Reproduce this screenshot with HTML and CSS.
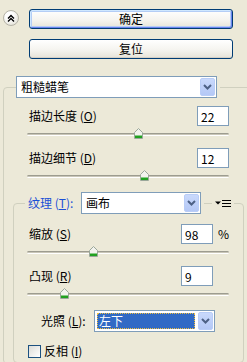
FILE: index.html
```html
<!DOCTYPE html>
<html lang="zh-CN">
<head>
    <meta charset="UTF-8">
    <title>粗糙蜡笔</title>
    <link rel="stylesheet" href="styles.css">
</head>
<body>
    <div class="actions">
        <button class="collapse" type="button">
            <svg width="8" height="8" viewBox="0 0 8 8"><path d="M1 4.5l3-3 3 3M1 7.5l3-3 3 3" fill="none" stroke="#000" stroke-width="1.4"/></svg>
        </button>
        <button class="btn default" type="button">确定</button>
        <span></span>
        <button class="btn" type="button">复位</button>
    </div>

    <fieldset class="group outer">
        <legend>
            <div class="combo filter">
                <span class="combo-text">粗糙蜡笔</span>
                <span class="combo-btn"><svg width="9" height="6" viewBox="0 0 9 6"><path d="M1 1l3.5 3.5L8 1" fill="none" stroke="#4D6185" stroke-width="2"/></svg></span>
            </div>
        </legend>
        <div class="group-body outer-body">
            <div class="param">
                <div class="row">
                    <label>描边长度 (<u>O</u>)</label>
                    <input class="num" type="text" value="22">
                </div>
                <div class="slider">
                    <div class="track"></div>
                    <span class="thumb" style="left: 107px"><svg width="9" height="11" viewBox="0 0 9 11"><path d="M4.5 0.5L8.5 4.5V10.5H0.5V4.5Z" fill="#f3f3ee" stroke="#9aa79a"/><path d="M1 7.5h7v2.5H1z" fill="#21a121"/></svg></span>
                </div>
            </div>
            <div class="param">
                <div class="row">
                    <label>描边细节 (<u>D</u>)</label>
                    <input class="num" type="text" value="12">
                </div>
                <div class="slider">
                    <div class="track"></div>
                    <span class="thumb" style="left: 113px"><svg width="9" height="11" viewBox="0 0 9 11"><path d="M4.5 0.5L8.5 4.5V10.5H0.5V4.5Z" fill="#f3f3ee" stroke="#9aa79a"/><path d="M1 7.5h7v2.5H1z" fill="#21a121"/></svg></span>
                </div>
            </div>

            <fieldset class="group inner">
                <legend>
                    <label class="texture-label">纹理 (<u>T</u>):</label>
                    <div class="combo texture">
                        <span class="combo-text">画布</span>
                        <span class="combo-btn"><svg width="9" height="6" viewBox="0 0 9 6"><path d="M1 1l3.5 3.5L8 1" fill="none" stroke="#4D6185" stroke-width="2"/></svg></span>
                    </div>
                    <span class="menu-icon">
                        <svg width="16" height="7" viewBox="0 0 16 7"><path d="M0 1.5h6l-3 3z" fill="#000"/><path d="M7 0.5h9M7 3.5h9M7 6.5h9" stroke="#000" stroke-width="1"/></svg>
                    </span>
                </legend>
                <div class="group-body inner-body">
                    <div class="param">
                        <div class="row">
                            <label>缩放 (<u>S</u>)</label>
                            <input class="num" type="text" value="98">
                            <span class="unit">%</span>
                        </div>
                        <div class="slider">
                            <div class="track"></div>
                            <span class="thumb" style="left: 62px"><svg width="9" height="11" viewBox="0 0 9 11"><path d="M4.5 0.5L8.5 4.5V10.5H0.5V4.5Z" fill="#f3f3ee" stroke="#9aa79a"/><path d="M1 7.5h7v2.5H1z" fill="#21a121"/></svg></span>
                        </div>
                    </div>
                    <div class="param">
                        <div class="row">
                            <label>凸现 (<u>R</u>)</label>
                            <input class="num" type="text" value="9">
                            <span class="unit"></span>
                        </div>
                        <div class="slider">
                            <div class="track"></div>
                            <span class="thumb" style="left: 33px"><svg width="9" height="11" viewBox="0 0 9 11"><path d="M4.5 0.5L8.5 4.5V10.5H0.5V4.5Z" fill="#f3f3ee" stroke="#9aa79a"/><path d="M1 7.5h7v2.5H1z" fill="#21a121"/></svg></span>
                        </div>
                    </div>

                    <div class="light">
                        <label class="light-label">光照 (<u>L</u>):</label>
                        <div class="combo light-combo focused">
                            <span class="combo-text">左下</span>
                            <span class="combo-btn"><svg width="9" height="6" viewBox="0 0 9 6"><path d="M1 1l3.5 3.5L8 1" fill="none" stroke="#4D6185" stroke-width="2"/></svg></span>
                        </div>
                    </div>

                    <label class="check">
                        <span class="box"></span>
                        <span>反相 (<u>I</u>)</span>
                    </label>
                </div>
            </fieldset>
        </div>
    </fieldset>
</body>
</html>
```

FILE: styles.css
```css
html, body {
    overflow: hidden;
}
body {
    margin: 0;
    background-color: #ece9d8;
    font-family: "Noto Sans CJK SC", "DejaVu Sans", sans-serif;
    font-size: 12px;
    line-height: 14px;
    color: #000;
}
u {
    text-decoration: underline;
    text-underline-offset: 1px;
}

/* Top buttons */
.actions {
    display: grid;
    grid-template-columns: 16px 204px;
    column-gap: 10px;
    row-gap: 10px;
    padding: 9px 0 0 3px;
}
.collapse {
    width: 16px;
    height: 16px;
    margin-top: 1px;
    padding: 0;
    border: 1px solid #b5b3a7;
    border-radius: 50%;
    background: radial-gradient(circle at 40% 35%, #ffffff 30%, #e4e2d8 80%, #cfccc0 100%);
    display: flex;
    align-items: center;
    justify-content: center;
}
.btn {
    height: 20px;
    padding: 0;
    font: inherit;
    color: #000;
    border: 1px solid #003c74;
    border-radius: 3px;
    background: linear-gradient(#ffffff 0%, #f5f4ef 55%, #e6e3d8 100%);
    box-shadow: inset 0 -1px #d6d0c5;
}
.btn.default {
    box-shadow: inset 1px 1px #cee7ff, inset -1px -1px #6982ee, inset 0 0 0 2px #b4cdf5;
}

/* Group boxes */
.group {
    margin: 0;
    padding: 0;
    min-width: 0;
    border: 1px solid #d0d0bf;
    border-radius: 4px;
}
.outer {
    margin: 17px -4px 0 3px;
}
.outer > legend {
    margin-left: 12px;
    padding: 0 3px 0 0;
}
.outer-body {
    padding: 8px 21px 0 23px;
}
.inner {
    margin: 2px -15px 0 -14px;
}
.inner > legend {
    position: relative;
    display: flex;
    align-items: center;
    margin-left: 11px;
    padding: 0 3px;
}
.inner-body {
    padding: 10px 14px 4px 13px;
}
.texture-label {
    width: 53px;
    color: #1a4fd6;
}
.menu-icon {
    position: absolute;
    left: calc(100% + 8px);
    top: 8px;
    padding: 0 3px;
    background-color: #ece9d8;
    display: flex;
}

/* Combo boxes */
.combo {
    display: flex;
    align-items: stretch;
    height: 22px;
    box-sizing: border-box;
    border: 1px solid #7f9db9;
    background-color: #fff;
}
.combo-text {
    flex: 1;
    display: flex;
    align-items: center;
    padding-left: 4px;
}
.combo-btn {
    width: 15px;
    margin: 1px;
    border: 1px solid #b9cdf7;
    border-radius: 2px;
    background: linear-gradient(#c9d9fc, #b4c8f6);
    display: flex;
    align-items: center;
    justify-content: center;
    box-sizing: border-box;
}
.combo.filter {
    width: 201px;
}
.combo.texture {
    width: 120px;
}
.combo.light-combo {
    width: 121px;
}
.combo.focused .combo-text {
    margin: 2px;
    padding-left: 2px;
    background-color: #316ac5;
    color: #fff;
    outline: 1px dotted #f0c040;
    outline-offset: -1px;
}

/* Parameter rows */
.param {
    height: 42px;
}
.row {
    display: flex;
    align-items: center;
    height: 20px;
}
.row label {
    flex: 1;
    padding-left: 2px;
}
.num {
    width: 32px;
    height: 20px;
    box-sizing: border-box;
    margin: 0;
    padding: 0 3px;
    border: 1px solid #7f9db9;
    font: inherit;
    color: #000;
    background-color: #fff;
}
.unit {
    width: 16px;
    padding-left: 5px;
    box-sizing: border-box;
}

/* Sliders */
.slider {
    position: relative;
    height: 22px;
    padding-top: 7px;
    box-sizing: border-box;
}
.track {
    height: 1px;
    border-top: 1px solid #9d9c90;
    border-bottom: 1px solid #fff;
    background-color: #c9c6b8;
    border-radius: 2px;
}
.thumb {
    position: absolute;
    top: 2px;
    display: flex;
}

/* Light + invert */
.light {
    display: flex;
    align-items: center;
    margin-top: 2px;
    padding-left: 14px;
}
.light-label {
    width: 53px;
}
.check {
    display: flex;
    align-items: center;
    gap: 3px;
    margin-top: 12px;
    padding-left: 1px;
}
.box {
    width: 13px;
    height: 13px;
    box-sizing: border-box;
    border: 1px solid #1c5180;
    background: linear-gradient(135deg, #dcdcd7, #ffffff);
}
```
